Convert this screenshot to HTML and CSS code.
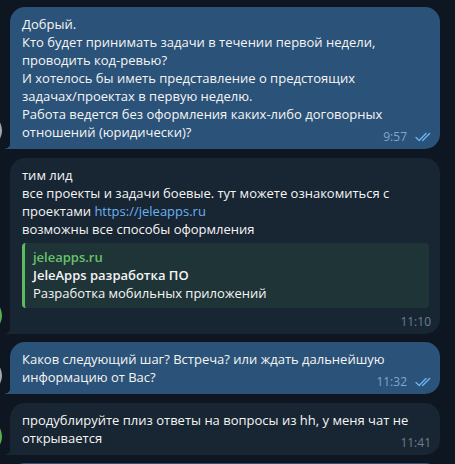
FILE: index.html
```html
<!DOCTYPE html>
<html lang="ru">
<head>
    <meta charset="UTF-8">
    <meta name="viewport" content="width=device-width, initial-scale=1.0">
    <title>Чат</title>
    <link rel="stylesheet" href="styles.css">
</head>
<body>
    <div class="chat">

        <!-- Моё сообщение -->
        <div class="msg out">
            <span class="avatar gray"></span>
            <div class="text">
                Добрый.<br>
                Кто будет принимать задачи в течении первой недели,<br>
                проводить код-ревью?<br>
                И хотелось бы иметь представление о предстоящих<br>
                задачах/проектах в первую неделю.<br>
                Работа ведется без оформления каких-либо договорных<br>
                отношений (юридически)?
            </div>
            <div class="meta">
                <span class="time">9:57</span>
                <svg class="check" width="18" height="10" viewBox="0 0 18 10">
                    <path d="M1 5.5 L4.2 8.6 L11 1.6" />
                    <path d="M7.6 8.6 L14.6 1.6" />
                </svg>
            </div>
        </div>

        <!-- Ответ с превью ссылки -->
        <div class="msg in with-preview">
            <span class="avatar green"></span>
            <div class="text">
                тим лид<br>
                все проекты и задачи боевые. тут можете ознакомиться с<br>
                проектами <a href="#">https://jeleapps.ru</a><br>
                возможны все способы оформления
            </div>
            <div class="preview">
                <div class="preview-site">jeleapps.ru</div>
                <div class="preview-title">JeleApps разработка ПО</div>
                <div class="preview-desc">Разработка мобильных приложений</div>
            </div>
            <div class="meta">
                <span class="time">11:10</span>
            </div>
        </div>

        <div class="msg out">
            <span class="avatar gray"></span>
            <div class="text">
                Каков следующий шаг? Встреча? или ждать дальнейшую<br>
                информацию от Вас?
            </div>
            <div class="meta">
                <span class="time">11:32</span>
                <svg class="check" width="18" height="10" viewBox="0 0 18 10">
                    <path d="M1 5.5 L4.2 8.6 L11 1.6" />
                    <path d="M7.6 8.6 L14.6 1.6" />
                </svg>
            </div>
        </div>

        <div class="msg in">
            <span class="avatar green"></span>
            <div class="text">
                продублируйте плиз ответы на вопросы из hh, у меня чат не<br>
                открывается
            </div>
            <div class="meta">
                <span class="time">11:41</span>
            </div>
        </div>

        <!-- следующее сообщение уходит за край -->
        <div class="msg out">
            <div class="text">&nbsp;</div>
        </div>

    </div>
</body>
</html>
```

FILE: styles.css
```css
body {
    margin: 0;
    background-color: #0e1621;
    font-family: "Open Sans", "Noto Sans", sans-serif;
    font-size: 13px;
    line-height: 18px;
    color: #f5f5f5;
    overflow: hidden;
    height: 464px;
}
.chat {
    display: flex;
    flex-direction: column;
    gap: 8.5px;
    padding: 7px 15px 0 10px;
}
.msg {
    position: relative;
    padding: 8px 12px;
    border-radius: 15px 15px 15px 0;
}
/* хвостик пузыря */
.msg::before {
    content: "";
    position: absolute;
    left: -6px;
    bottom: 0;
    width: 6px;
    height: 7px;
}
.msg.out {
    background-color: #2b5278;
}
.msg.out::before {
    background: radial-gradient(circle at 0 0, transparent 6.5px, #2b5278 7px);
}
.msg.in {
    background-color: #182533;
}
.msg.in::before {
    background: radial-gradient(circle at 0 0, transparent 6.5px, #182533 7px);
}
.msg.with-preview {
    padding-bottom: 26px;
}
.text a {
    color: #6ab2f2;
    text-decoration: none;
}
.avatar {
    position: absolute;
    left: -41px;
    bottom: 2px;
    width: 33px;
    height: 33px;
    border-radius: 50%;
}
.avatar.gray {
    background-color: #a3a8ae;
}
.avatar.green {
    background-color: #55b24f;
}
.preview {
    margin-top: 5px;
    margin-right: -1px;
    padding: 5px 8px 6px 8px;
    background-color: #1f3437;
    border-left: 3px solid #5dbb62;
    border-radius: 4px;
}
.preview-site {
    color: #68c26c;
    font-weight: 600;
}
.preview-title {
    font-weight: 600;
}
.meta {
    position: absolute;
    right: 9px;
    bottom: 5px;
    display: flex;
    align-items: center;
    gap: 8px;
    font-size: 12px;
    line-height: 14px;
}
.msg.out .meta {
    right: 7px;
}
.msg.out .time {
    color: #7da8d3;
}
.msg.in .time {
    color: #6d7f8f;
}
.check {
    fill: none;
    stroke: #6ab2f2;
    stroke-width: 1.4;
    stroke-linecap: round;
    stroke-linejoin: round;
    margin-bottom: 1px;
}
```
